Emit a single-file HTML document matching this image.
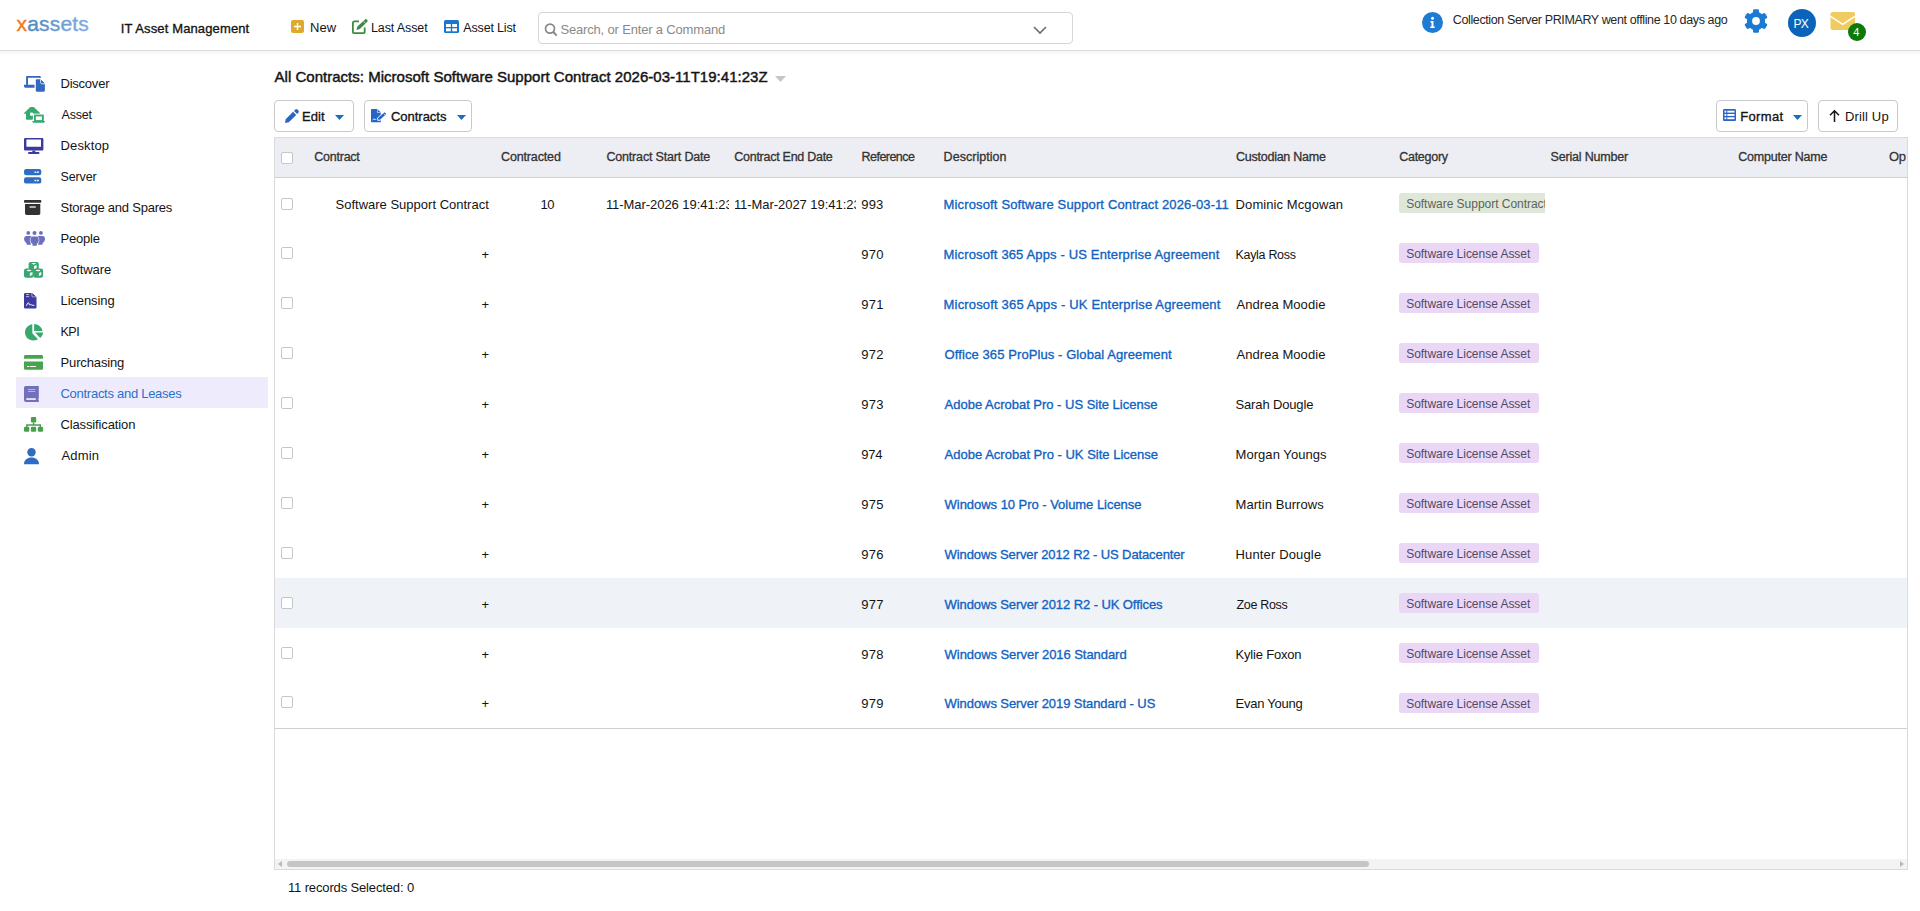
<!DOCTYPE html>
<html><head><meta charset="utf-8">
<style>
html,body{margin:0;padding:0;width:1920px;height:911px;overflow:hidden;background:#fff;}
body{position:relative;font-family:"Liberation Sans", sans-serif;color:#222;}
.a{position:absolute;box-sizing:border-box;}
.t{position:absolute;white-space:nowrap;}
svg{position:absolute;overflow:visible;}
</style></head><body>
<div class="a" style="left:0px;top:50px;width:1920px;height:1px;background:#dedbd8;"></div>
<div class="a" style="left:0px;top:51px;width:1920px;height:4px;background:linear-gradient(#f5f5f5,#fdfdfd);"></div>
<svg style="left:0;top:0" width="110" height="45" viewBox="0 0 110 45"><defs><linearGradient id="lg" x1="29" y1="0" x2="90" y2="0" gradientUnits="userSpaceOnUse"><stop offset="0" stop-color="#508bbf"/><stop offset="1" stop-color="#86ade6"/></linearGradient></defs><text x="16.6" y="30.6" font-family="Liberation Sans" font-size="21" letter-spacing="0.15" stroke-width="0.4"><tspan fill="#ef7b1c" stroke="#ef7b1c">x</tspan><tspan fill="url(#lg)" stroke="url(#lg)">assets</tspan></text></svg>
<div class="t" style="left:120.70px;top:21.70px;font-size:13px;line-height:13px;-webkit-text-stroke:0.33px currentColor;color:#141414;letter-spacing:0.128px;">IT Asset Management</div>
<svg style="left:291px;top:20px" width="13" height="13" viewBox="0 0 13 13"><rect x="0" y="0" width="13" height="13" rx="2" fill="#e0a92a"/><path d="M6.5 3v7M3 6.5h7" stroke="#fff" stroke-width="1.4"/></svg>
<div class="t" style="left:309.90px;top:20.90px;font-size:13px;line-height:13px;color:#141414;letter-spacing:0.150px;">New</div>
<svg style="left:352px;top:19px" width="16" height="15" viewBox="0 0 16 15"><path d="M7 2.4H2.3C1.5 2.4.9 3 .9 3.8v9.1c0 .8.6 1.3 1.4 1.3h9.1c.8 0 1.3-.5 1.3-1.3V8.4" fill="none" stroke="#3d8b40" stroke-width="1.8"/><path d="M13 .4a1.3 1.3 0 0 1 1.8 0l.5.5a1.3 1.3 0 0 1 0 1.8L7.9 10.1 4.4 11.1l1-3.5z" fill="#3d8b40"/><path d="M11.4 2.1l2.1 2.1" stroke="#fff" stroke-width=".7"/></svg>
<div class="t" style="left:371.00px;top:21.75px;font-size:12.5px;line-height:12.5px;color:#141414;letter-spacing:-0.111px;">Last Asset</div>
<svg style="left:444px;top:20px" width="15" height="13" viewBox="0 0 15 13"><rect x="0" y="0" width="15" height="13" rx="1.5" fill="#1a74d2"/><rect x="2" y="4" width="4.8" height="3" fill="#fff"/><rect x="8.2" y="4" width="4.8" height="3" fill="#fff"/><rect x="2" y="8.3" width="4.8" height="3" fill="#fff"/><rect x="8.2" y="8.3" width="4.8" height="3" fill="#fff"/></svg>
<div class="t" style="left:463.30px;top:21.55px;font-size:12.5px;line-height:12.5px;color:#141414;letter-spacing:-0.167px;">Asset List</div>
<div class="a" style="left:538px;top:12px;width:535px;height:32px;border:1px solid #d6d6d6;border-radius:4px;background:#fff;"></div>
<svg style="left:544px;top:23px" width="14" height="13" viewBox="0 0 14 13"><circle cx="6" cy="5.6" r="4.5" fill="none" stroke="#878787" stroke-width="1.7"/><path d="M9.3 9l3.4 3.6" stroke="#878787" stroke-width="1.9"/></svg>
<div class="t" style="left:560.40px;top:22.80px;font-size:13px;line-height:13px;color:#8a8a8a;letter-spacing:-0.168px;">Search, or Enter a Command</div>
<svg style="left:1033px;top:25.5px" width="14" height="9" viewBox="0 0 14 9"><path d="M1 1l6 6 6-6" fill="none" stroke="#707070" stroke-width="1.7"/></svg>
<svg style="left:1422px;top:11.5px" width="21" height="21" viewBox="0 0 21 21"><circle cx="10.5" cy="10.5" r="10.5" fill="#1f7bd1"/><circle cx="10.5" cy="6.2" r="1.5" fill="#fff"/><path d="M8.6 9h2.9v5.4h1.2v1.7H8.3v-1.7h1.2v-3.7h-.9z" fill="#fff"/></svg>
<div class="t" style="left:1452.75px;top:14.05px;font-size:12.5px;line-height:12.5px;color:#262626;letter-spacing:-0.372px;">Collection Server PRIMARY went offline 10 days ago</div>
<svg style="left:1744.3px;top:8.9px" width="24" height="24" viewBox="0 0 24 24"><g fill="#1b7ad3"><circle cx="12" cy="12" r="9.2"/><rect x="9" y="0.2" width="6" height="6" rx="1.3" transform="rotate(0 12 12)"/><rect x="9" y="0.2" width="6" height="6" rx="1.3" transform="rotate(60 12 12)"/><rect x="9" y="0.2" width="6" height="6" rx="1.3" transform="rotate(120 12 12)"/><rect x="9" y="0.2" width="6" height="6" rx="1.3" transform="rotate(180 12 12)"/><rect x="9" y="0.2" width="6" height="6" rx="1.3" transform="rotate(240 12 12)"/><rect x="9" y="0.2" width="6" height="6" rx="1.3" transform="rotate(300 12 12)"/></g><circle cx="12" cy="12" r="3.9" fill="#fff"/></svg>
<div class="a" style="left:1788px;top:9px;width:28px;height:28px;border-radius:50%;background:#0b64b9;"></div>
<div class="t" style="left:1793.60px;top:17.80px;font-size:12px;line-height:12px;color:#fff;letter-spacing:-0.850px;">PX</div>
<svg style="left:1830px;top:12px" width="26" height="19" viewBox="0 0 26 19"><rect x="0.5" y="0" width="24.5" height="18" rx="2" fill="#f0cb5f"/><path d="M.6 4.4l12.1 8 12.1-8" fill="none" stroke="#fff" stroke-width="1.5"/></svg>
<div class="a" style="left:1847.8px;top:23.3px;width:18.2px;height:18.2px;border-radius:50%;background:#0a7a0a;"></div>
<div class="t" style="left:1853.30px;top:27.30px;font-size:11px;line-height:11px;color:#fff;">4</div>
<div class="a" style="left:16px;top:377px;width:252px;height:31px;background:#eeecfc;"></div>
<div class="t" style="left:60.50px;top:77.00px;font-size:13px;line-height:13px;color:#141414;letter-spacing:-0.229px;">Discover</div>
<div class="t" style="left:61.50px;top:108.75px;font-size:12.5px;line-height:12.5px;color:#141414;letter-spacing:-0.200px;">Asset</div>
<div class="t" style="left:60.50px;top:139.00px;font-size:13px;line-height:13px;color:#141414;letter-spacing:0.150px;">Desktop</div>
<div class="t" style="left:60.50px;top:170.75px;font-size:12.5px;line-height:12.5px;color:#141414;letter-spacing:-0.120px;">Server</div>
<div class="t" style="left:60.50px;top:201.00px;font-size:13px;line-height:13px;color:#141414;letter-spacing:-0.229px;">Storage and Spares</div>
<div class="t" style="left:60.50px;top:232.00px;font-size:13px;line-height:13px;color:#141414;letter-spacing:-0.200px;">People</div>
<div class="t" style="left:60.50px;top:263.00px;font-size:13px;line-height:13px;color:#141414;letter-spacing:-0.086px;">Software</div>
<div class="t" style="left:60.50px;top:294.00px;font-size:13px;line-height:13px;color:#141414;letter-spacing:-0.100px;">Licensing</div>
<div class="t" style="left:60.50px;top:325.75px;font-size:12.5px;line-height:12.5px;color:#141414;letter-spacing:-0.500px;">KPI</div>
<div class="t" style="left:60.50px;top:356.00px;font-size:13px;line-height:13px;color:#141414;letter-spacing:-0.133px;">Purchasing</div>
<div class="t" style="left:60.50px;top:387.00px;font-size:13px;line-height:13px;color:#2b6fcd;letter-spacing:-0.274px;">Contracts and Leases</div>
<div class="t" style="left:60.50px;top:418.00px;font-size:13px;line-height:13px;color:#141414;letter-spacing:-0.131px;">Classification</div>
<div class="t" style="left:61.50px;top:449.00px;font-size:13px;line-height:13px;color:#141414;letter-spacing:0.150px;">Admin</div>
<svg style="left:24px;top:76px" width="22" height="17" viewBox="0 0 22 17"><g fill="#3268c0"><path d="M3.1 0H15.6C16.3 0 16.8.5 16.8 1.2V1.9H15.2V1.7H4V8.8H10.5V11.7H1.4C.6 11.7 0 11.1 0 10.3V8.8H2.1V1C2.1.4 2.5 0 3.1 0z"/><path d="M13 3.3H16.6L20.9 7.7V14.6C20.9 15.3 20.4 15.8 19.7 15.8H13C12.3 15.8 11.8 15.3 11.8 14.6V4.5C11.8 3.8 12.3 3.3 13 3.3z"/></g><path d="M16.6 3.2V6.6C16.6 7.2 17.1 7.8 17.7 7.8H21" fill="none" stroke="#fff" stroke-width=".8"/><path d="M17.5 4.2L20.1 6.9H17.5z" fill="#3268c0"/></svg>
<svg style="left:24px;top:107px" width="22" height="17" viewBox="0 0 22 17"><g fill="#36a96f"><path d="M6.3 0H9.7L16 6.1C16.3 6.5 16.1 6.8 15.6 6.8H.5C0 6.8-.2 6.4.1 6.1z"/><rect x="2" y="6" width="6.9" height="6.7" rx="1"/></g><rect x="6" y="5.5" width="3.1" height="3.3" rx="1.1" fill="#fff"/><rect x="9.1" y="6.8" width="13" height="10" fill="#fff"/><rect x="10.9" y="8.5" width="8" height="5.5" fill="none" stroke="#36a96f" stroke-width="1.8"/><path d="M8.1 13.9H21.2L20.6 15.3C20.4 15.6 20.1 15.8 19.7 15.8H9.6C9.2 15.8 8.9 15.6 8.7 15.3z" fill="#36a96f"/></svg>
<svg style="left:24px;top:138px" width="20" height="17" viewBox="0 0 20 17"><path d="M1.3 0h16.8c.7 0 1.3.6 1.3 1.3v10c0 .7-.6 1.3-1.3 1.3H1.3C.6 12.6 0 12 0 11.3v-10C0 .6.6 0 1.3 0zM2.4 1.4v7.3h14.6V1.4z" fill="#3b3a9f" fill-rule="evenodd"/><path d="M8.3 12.6h3v1.8h-3z" fill="#3b3a9f"/><rect x="4" y="14" width="11.5" height="2" rx="1" fill="#3b3a9f"/></svg>
<svg style="left:24px;top:169px" width="18" height="15" viewBox="0 0 18 15"><rect x="0" y="0" width="17.3" height="6.3" rx="2.2" fill="#2f6dc3"/><rect x="0" y="8.3" width="17.3" height="6.3" rx="2.2" fill="#2f6dc3"/><rect x="10.5" y="2.5" width="1.8" height="1.4" fill="#fff"/><rect x="13" y="2.5" width="1.8" height="1.4" fill="#fff"/><rect x="10.5" y="10.8" width="1.8" height="1.4" fill="#fff"/><rect x="13" y="10.8" width="1.8" height="1.4" fill="#fff"/></svg>
<svg style="left:24px;top:200px" width="18" height="16" viewBox="0 0 18 16"><rect x="0" y="0" width="17.3" height="2.8" rx=".8" fill="#333"/><path d="M1 4h15.3v9.3c0 1-.8 1.7-1.7 1.7H2.7C1.7 15 1 14.3 1 13.3z" fill="#333"/><rect x="5.5" y="6.3" width="6.3" height="1.4" rx=".5" fill="#ddd"/></svg>
<svg style="left:24px;top:231px" width="22" height="15" viewBox="0 0 22 15"><g fill="#6e6ebf"><circle cx="4.3" cy="1.9" r="1.9"/><circle cx="10.5" cy="1.9" r="2"/><circle cx="16.9" cy="1.9" r="1.9"/><path d="M2.5 5.1H7.6C6.4 6.5 5.8 7.8 5.8 9.3 5.8 10.6 6.3 11.8 7 12.7V13.7H2.6V12.2C1 11 .1 9.7.1 8.1.1 6.3 1 5.1 2.5 5.1z"/><path d="M8.6 5.5H12.4C14 5.5 14.8 7 14.8 9.2 14.8 11 13.9 12.3 12.8 12.8V14.8H8.5V12.8C7.4 12.3 6.4 11 6.4 9.2 6.4 7 7.1 5.5 8.6 5.5z"/><path d="M18.6 5.1H13.5C14.7 6.5 15.3 7.8 15.3 9.3 15.3 10.6 14.8 11.8 14.1 12.7V13.7H18.5V12.2C20.1 11 21 9.7 21 8.1 21 6.3 20.1 5.1 18.6 5.1z"/></g></svg>
<svg style="left:24px;top:262px" width="20" height="16" viewBox="0 0 20 16"><g fill="#36a86f"><rect x="4.6" y="0" width="10.2" height="8" rx="2"/><rect x="0" y="6.6" width="9.8" height="9.2" rx="2.2"/><rect x="9.3" y="6.6" width="9.8" height="9.2" rx="2.2"/></g><g fill="#fff"><path d="M7.3 1.1H12.3L9.8 2.8z"/><path d="M10.1 3.9L12.6 3V6.2L10.1 7.1z"/><ellipse cx="5" cy="8.5" rx="2.3" ry=".75"/><path d="M5.8 11L8.4 10V13L5.8 14z"/><ellipse cx="14.1" cy="8.5" rx="2.3" ry=".75"/><path d="M14.9 11L17.3 10V13L14.9 14z"/></g></svg>
<svg style="left:24px;top:293px" width="14" height="16" viewBox="0 0 14 16"><path d="M1.3 0h6.9l4.3 4.3v9.9c0 .8-.6 1.3-1.3 1.3H1.3C.6 15.5 0 15 0 14.2V1.3C0 .6.6 0 1.3 0z" fill="#3d3aa0"/><path d="M7.9 0v3.1c0 .4.3.7.7.7h3.9" fill="none" stroke="#c8c8e8" stroke-width=".8"/><path d="M9 .9l2.6 2.3H9z" fill="#3d3aa0"/><rect x="2" y="1.2" width="3.2" height=".8" fill="#d8d8f0"/><rect x="2" y="3.1" width="3.2" height="1" fill="#b8b8e0"/><path d="M2 12.8C3 12.6 3.3 9.8 4.4 9.8S5.1 12.1 5.6 12 6.5 11.5 7.1 11.7 8 12.3 10.4 12.4" fill="none" stroke="#fff" stroke-width="1"/></svg>
<svg style="left:25px;top:323.5px" width="19" height="16.4" viewBox="0 0 19 17" preserveAspectRatio="none"><path d="M7.3 0.3v9.2l5.7 6.3c-1.4.9-3 1.2-4.7 1.2C3.7 17 0 13.2 0 8.7 0 4.4 3.2.8 7.3.3z" fill="#38a86d"/><path d="M9.1 0c4.3.1 7.8 3.4 8.3 7.2H9.1z" fill="#38a86d"/><path d="M10 8.9h8.1c-.2 2.3-1.3 4.2-2.9 5.5z" fill="#38a86d"/></svg>
<svg style="left:24px;top:355px" width="20" height="15" viewBox="0 0 20 15"><path d="M1.5 0h16c.8 0 1.5.7 1.5 1.5v2.2H0V1.5C0 .7.7 0 1.5 0z" fill="#47a34e"/><path d="M0 6.5h19v6.7c0 .9-.7 1.6-1.6 1.6H1.6C.7 14.8 0 14.1 0 13.2z" fill="#47a34e"/><path d="M3 11.5h2.3M6.1 11.5h5.8" stroke="#fff" stroke-width="1"/></svg>
<svg style="left:24px;top:386px" width="15" height="16" viewBox="0 0 15 16"><path d="M1.8 0h13v12.5l-.8.8.8.8V16H2C.9 16 0 15.1 0 14V1.8C0 .8.8 0 1.8 0z" fill="#7070bd"/><rect x="4" y="3" width="7.3" height="1" fill="#b6b6e0"/><rect x="4" y="5" width="7.3" height="1" fill="#b6b6e0"/><rect x="2.3" y="12.3" width="9.5" height="1.5" fill="#fff"/></svg>
<svg style="left:24px;top:417px" width="20" height="15" viewBox="0 0 20 15"><rect x="6.9" y="0" width="5.3" height="5.5" rx="1.2" fill="#48a04a"/><path d="M9.55 5.5v2.5M2.8 10.5V8h13.5v2.5" stroke="#48a04a" stroke-width="1.4" fill="none"/><rect x="0" y="9.8" width="5.3" height="5" rx="1.2" fill="#48a04a"/><rect x="6.9" y="9.8" width="5.3" height="5" rx="1.2" fill="#48a04a"/><rect x="13.8" y="9.8" width="5.3" height="5" rx="1.2" fill="#48a04a"/></svg>
<svg style="left:24px;top:448px" width="15" height="17" viewBox="0 0 15 17"><circle cx="7.5" cy="4.2" r="4.2" fill="#2e6bc3"/><path d="M7.5 9.5c4 0 7.5 2.5 7.5 6.5v.2H0V16c0-4 3.5-6.5 7.5-6.5z" fill="#2e6bc3"/></svg>
<div class="t" style="left:274.50px;top:68.60px;font-size:15px;line-height:15px;-webkit-text-stroke:0.45px currentColor;color:#141414;letter-spacing:0.021px;">All Contracts: Microsoft Software Support Contract 2026-03-11T19:41:23Z</div>
<svg style="left:775px;top:76px" width="11" height="6" viewBox="0 0 11 6"><path d="M0 0h11L5.5 6z" fill="#c6c6c6"/></svg>
<div class="a" style="left:274px;top:100px;width:80px;height:32px;border:1px solid #c9c9c9;border-radius:4px;background:#fff;"></div>
<svg style="left:285px;top:108.5px" width="14" height="14" viewBox="0 0 14 14"><path d="M10.3.6a1.5 1.5 0 0 1 2.1 0l1 1a1.5 1.5 0 0 1 0 2.1l-1.3 1.3-3.1-3.1zM8.1 2.8l3.1 3.1-7.4 7.4L0 14l.7-3.8z" fill="#2a64c5"/></svg>
<div class="t" style="left:302.00px;top:109.90px;font-size:13px;line-height:13px;-webkit-text-stroke:0.33px currentColor;color:#141414;letter-spacing:0.067px;">Edit</div>
<svg style="left:335px;top:114.5px" width="9" height="5" viewBox="0 0 9 5"><path d="M0 0h9L4.5 5z" fill="#1b6cc6"/></svg>
<div class="a" style="left:364px;top:100px;width:108px;height:32px;border:1px solid #c9c9c9;border-radius:4px;background:#fff;"></div>
<svg style="left:371px;top:108.5px" width="16" height="14" viewBox="0 0 16 14"><path d="M1 0H6.3L9.8 3.5V13.2H1C.4 13.2 0 12.8 0 12.2V1C0 .4.4 0 1 0z" fill="#2563c6"/><path d="M6.4 .2V3.6H9.7" fill="none" stroke="#fff" stroke-width=".6"/><path d="M8 9.7L14.6 3.9" stroke="#fff" stroke-width="3.8" stroke-linecap="round"/><path d="M7.6 10.2L14.4 4.1" stroke="#2563c6" stroke-width="2.6"/><path d="M6.6 11.3L7.2 9.4 8.6 10.8z" fill="#2563c6"/><path d="M12.6 4.6l1.5 1.5" stroke="#fff" stroke-width=".6"/><path d="M1.6 11.3L2.9 9.6 3.8 11 4.6 10.2 5.4 11M6 11.1H9.6" fill="none" stroke="#fff" stroke-width=".7"/></svg>
<div class="t" style="left:391.00px;top:109.90px;font-size:13px;line-height:13px;-webkit-text-stroke:0.33px currentColor;color:#141414;letter-spacing:-0.031px;">Contracts</div>
<svg style="left:457px;top:114.5px" width="9" height="5" viewBox="0 0 9 5"><path d="M0 0h9L4.5 5z" fill="#1b6cc6"/></svg>
<div class="a" style="left:1716px;top:100px;width:92px;height:32px;border:1px solid #c9c9c9;border-radius:4px;background:#fff;"></div>
<svg style="left:1722.5px;top:109px" width="13" height="12" viewBox="0 0 13 12"><path d="M1.3 0h10.4c.7 0 1.3.6 1.3 1.3v9.4c0 .7-.6 1.3-1.3 1.3H1.3C.6 12 0 11.4 0 10.7V1.3C0 .6.6 0 1.3 0z" fill="#2a64c5"/><rect x="1.5" y="1.7" width="1.8" height="1.9" fill="#fff"/><rect x="4.3" y="1.7" width="7.2" height="1.9" fill="#fff"/><rect x="1.5" y="5" width="1.8" height="1.9" fill="#fff"/><rect x="4.3" y="5" width="7.2" height="1.9" fill="#fff"/><rect x="1.5" y="8.3" width="1.8" height="1.9" fill="#fff"/><rect x="4.3" y="8.3" width="7.2" height="1.9" fill="#fff"/></svg>
<div class="t" style="left:1740.25px;top:109.60px;font-size:13px;line-height:13px;-webkit-text-stroke:0.33px currentColor;color:#141414;letter-spacing:0.330px;">Format</div>
<svg style="left:1793px;top:114.5px" width="9" height="5" viewBox="0 0 9 5"><path d="M0 0h9L4.5 5z" fill="#1b6cc6"/></svg>
<div class="a" style="left:1818px;top:100px;width:80px;height:32px;border:1px solid #c9c9c9;border-radius:4px;background:#fff;"></div>
<svg style="left:1829px;top:109.5px" width="11" height="12" viewBox="0 0 11 12"><path d="M5.5 1v11M1 5.3l4.5-4.5 4.5 4.5" fill="none" stroke="#141414" stroke-width="1.5"/></svg>
<div class="t" style="left:1845.00px;top:109.60px;font-size:13px;line-height:13px;color:#141414;letter-spacing:0.143px;">Drill Up</div>
<div class="a" style="left:274px;top:137px;width:1634px;height:733px;border:1px solid #dadada;"></div>
<div class="a" style="left:275px;top:138px;width:1632px;height:39px;background:#edeef3;"></div>
<div class="a" style="left:275px;top:177px;width:1632px;height:1px;background:#cfcfcf;"></div>
<div class="a" style="left:281px;top:152px;width:12px;height:12px;border:1px solid #c6c6c6;border-radius:2px;background:#fff;"></div>
<div class="t" style="left:314.30px;top:151.15px;font-size:12.5px;line-height:12.5px;-webkit-text-stroke:0.31px currentColor;color:#333;letter-spacing:-0.243px;">Contract</div>
<div class="t" style="left:501.00px;top:151.15px;font-size:12.5px;line-height:12.5px;-webkit-text-stroke:0.31px currentColor;color:#333;letter-spacing:-0.144px;">Contracted</div>
<div class="t" style="left:606.40px;top:151.15px;font-size:12.5px;line-height:12.5px;-webkit-text-stroke:0.31px currentColor;color:#333;letter-spacing:-0.172px;">Contract Start Date</div>
<div class="t" style="left:734.30px;top:151.15px;font-size:12.5px;line-height:12.5px;-webkit-text-stroke:0.31px currentColor;color:#333;letter-spacing:-0.269px;">Contract End Date</div>
<div class="t" style="left:861.50px;top:151.15px;font-size:12.5px;line-height:12.5px;-webkit-text-stroke:0.31px currentColor;color:#333;letter-spacing:-0.525px;">Reference</div>
<div class="t" style="left:943.60px;top:151.15px;font-size:12.5px;line-height:12.5px;-webkit-text-stroke:0.31px currentColor;color:#333;letter-spacing:0.040px;">Description</div>
<div class="t" style="left:1236.00px;top:151.15px;font-size:12.5px;line-height:12.5px;-webkit-text-stroke:0.31px currentColor;color:#333;letter-spacing:-0.246px;">Custodian Name</div>
<div class="t" style="left:1399.20px;top:151.15px;font-size:12.5px;line-height:12.5px;-webkit-text-stroke:0.31px currentColor;color:#333;letter-spacing:-0.257px;">Category</div>
<div class="t" style="left:1550.50px;top:151.15px;font-size:12.5px;line-height:12.5px;-webkit-text-stroke:0.31px currentColor;color:#333;letter-spacing:-0.183px;">Serial Number</div>
<div class="t" style="left:1738.30px;top:151.15px;font-size:12.5px;line-height:12.5px;-webkit-text-stroke:0.31px currentColor;color:#333;letter-spacing:-0.217px;">Computer Name</div>
<div class="a" style="left:1880px;top:140px;width:26px;height:30px;overflow:hidden;"><div class="t" style="left:9px;top:10.40px;font-size:13px;line-height:13px;-webkit-text-stroke:0.26px #333;color:#333;letter-spacing:-0.3px">Op</div></div>
<div class="a" style="left:275px;top:578px;width:1632px;height:50px;background:#eff2f7;"></div>
<div class="a" style="left:281px;top:197.5px;width:12px;height:12px;border:1px solid #c6c6c6;border-radius:2px;background:#fff;"></div>
<div class="t" style="left:335.50px;top:198.00px;font-size:13px;line-height:13px;color:#141414;letter-spacing:0.004px;">Software Support Contract</div>
<div class="t" style="left:540.40px;top:198.00px;font-size:13px;line-height:13px;color:#141414;letter-spacing:-0.400px;">10</div>
<div class="a" style="left:600px;top:180px;width:128.5px;height:46px;overflow:hidden;"><div class="t" style="left:5.90px;top:18.00px;font-size:13px;line-height:13px;color:#141414;letter-spacing:-0.050px;">11-Mar-2026 19:41:23</div>
</div>
<div class="a" style="left:728px;top:180px;width:128px;height:46px;overflow:hidden;"><div class="t" style="left:5.90px;top:18.00px;font-size:13px;line-height:13px;color:#141414;letter-spacing:-0.050px;">11-Mar-2027 19:41:23</div>
</div>
<div class="t" style="left:861.30px;top:198.00px;font-size:13px;line-height:13px;color:#141414;letter-spacing:0.100px;">993</div>
<div class="t" style="left:943.60px;top:198.00px;font-size:13px;line-height:13px;-webkit-text-stroke:0.33px currentColor;color:#1062c2;letter-spacing:0.144px;">Microsoft Software Support Contract 2026-03-11</div>
<div class="t" style="left:1235.60px;top:198.00px;font-size:13px;line-height:13px;color:#141414;letter-spacing:0.086px;">Dominic Mcgowan</div>
<div class="a" style="left:1399px;top:193px;width:146px;height:20px;overflow:hidden;"><div class="a" style="left:0;top:0;width:170px;height:20px;background:#dfe8d8;border-radius:3px;"></div><div class="t" style="left:7.20px;top:5.00px;font-size:12px;line-height:12px;color:#5c625c;letter-spacing:-0.029px;">Software Support Contract</div>
</div>
<div class="a" style="left:281px;top:247px;width:12px;height:12px;border:1px solid #c6c6c6;border-radius:2px;background:#fff;"></div>
<div class="t" style="left:481.60px;top:247.50px;font-size:13px;line-height:13px;color:#141414;">+</div>
<div class="t" style="left:861.30px;top:248.00px;font-size:13px;line-height:13px;color:#141414;letter-spacing:0.200px;">970</div>
<div class="t" style="left:943.60px;top:248.00px;font-size:13px;line-height:13px;-webkit-text-stroke:0.33px currentColor;color:#1062c2;letter-spacing:0.144px;">Microsoft 365 Apps - US Enterprise Agreement</div>
<div class="t" style="left:1235.50px;top:248.75px;font-size:12.5px;line-height:12.5px;color:#141414;letter-spacing:-0.311px;">Kayla Ross</div>
<div class="a" style="left:1399px;top:243px;width:140px;height:20px;background:#e9d7f5;border-radius:3px;"></div>
<div class="t" style="left:1406.20px;top:248.00px;font-size:12px;line-height:12px;color:#514a68;letter-spacing:-0.029px;">Software License Asset</div>
<div class="a" style="left:281px;top:297px;width:12px;height:12px;border:1px solid #c6c6c6;border-radius:2px;background:#fff;"></div>
<div class="t" style="left:481.60px;top:297.50px;font-size:13px;line-height:13px;color:#141414;">+</div>
<div class="t" style="left:861.30px;top:298.00px;font-size:13px;line-height:13px;color:#141414;letter-spacing:0.200px;">971</div>
<div class="t" style="left:943.60px;top:298.00px;font-size:13px;line-height:13px;-webkit-text-stroke:0.33px currentColor;color:#1062c2;letter-spacing:0.167px;">Microsoft 365 Apps - UK Enterprise Agreement</div>
<div class="t" style="left:1236.50px;top:298.00px;font-size:13px;line-height:13px;color:#141414;letter-spacing:0.058px;">Andrea Moodie</div>
<div class="a" style="left:1399px;top:293px;width:140px;height:20px;background:#e9d7f5;border-radius:3px;"></div>
<div class="t" style="left:1406.20px;top:298.00px;font-size:12px;line-height:12px;color:#514a68;letter-spacing:-0.029px;">Software License Asset</div>
<div class="a" style="left:281px;top:347px;width:12px;height:12px;border:1px solid #c6c6c6;border-radius:2px;background:#fff;"></div>
<div class="t" style="left:481.60px;top:347.50px;font-size:13px;line-height:13px;color:#141414;">+</div>
<div class="t" style="left:861.30px;top:348.00px;font-size:13px;line-height:13px;color:#141414;letter-spacing:0.200px;">972</div>
<div class="t" style="left:944.60px;top:348.00px;font-size:13px;line-height:13px;-webkit-text-stroke:0.33px currentColor;color:#1062c2;letter-spacing:0.089px;">Office 365 ProPlus - Global Agreement</div>
<div class="t" style="left:1236.50px;top:348.00px;font-size:13px;line-height:13px;color:#141414;letter-spacing:0.058px;">Andrea Moodie</div>
<div class="a" style="left:1399px;top:343px;width:140px;height:20px;background:#e9d7f5;border-radius:3px;"></div>
<div class="t" style="left:1406.20px;top:348.00px;font-size:12px;line-height:12px;color:#514a68;letter-spacing:-0.029px;">Software License Asset</div>
<div class="a" style="left:281px;top:397px;width:12px;height:12px;border:1px solid #c6c6c6;border-radius:2px;background:#fff;"></div>
<div class="t" style="left:481.60px;top:397.50px;font-size:13px;line-height:13px;color:#141414;">+</div>
<div class="t" style="left:861.30px;top:398.00px;font-size:13px;line-height:13px;color:#141414;letter-spacing:0.200px;">973</div>
<div class="t" style="left:944.60px;top:398.00px;font-size:13px;line-height:13px;-webkit-text-stroke:0.33px currentColor;color:#1062c2;letter-spacing:-0.012px;">Adobe Acrobat Pro - US Site License</div>
<div class="t" style="left:1235.50px;top:398.00px;font-size:13px;line-height:13px;color:#141414;letter-spacing:-0.145px;">Sarah Dougle</div>
<div class="a" style="left:1399px;top:393px;width:140px;height:20px;background:#e9d7f5;border-radius:3px;"></div>
<div class="t" style="left:1406.20px;top:398.00px;font-size:12px;line-height:12px;color:#514a68;letter-spacing:-0.029px;">Software License Asset</div>
<div class="a" style="left:281px;top:447px;width:12px;height:12px;border:1px solid #c6c6c6;border-radius:2px;background:#fff;"></div>
<div class="t" style="left:481.60px;top:447.50px;font-size:13px;line-height:13px;color:#141414;">+</div>
<div class="t" style="left:861.30px;top:448.00px;font-size:13px;line-height:13px;color:#141414;letter-spacing:-0.300px;">974</div>
<div class="t" style="left:944.60px;top:448.00px;font-size:13px;line-height:13px;-webkit-text-stroke:0.33px currentColor;color:#1062c2;letter-spacing:0.009px;">Adobe Acrobat Pro - UK Site License</div>
<div class="t" style="left:1235.50px;top:448.00px;font-size:13px;line-height:13px;color:#141414;letter-spacing:0.058px;">Morgan Youngs</div>
<div class="a" style="left:1399px;top:443px;width:140px;height:20px;background:#e9d7f5;border-radius:3px;"></div>
<div class="t" style="left:1406.20px;top:448.00px;font-size:12px;line-height:12px;color:#514a68;letter-spacing:-0.029px;">Software License Asset</div>
<div class="a" style="left:281px;top:497px;width:12px;height:12px;border:1px solid #c6c6c6;border-radius:2px;background:#fff;"></div>
<div class="t" style="left:481.60px;top:497.50px;font-size:13px;line-height:13px;color:#141414;">+</div>
<div class="t" style="left:861.30px;top:498.00px;font-size:13px;line-height:13px;color:#141414;letter-spacing:0.200px;">975</div>
<div class="t" style="left:944.60px;top:498.00px;font-size:13px;line-height:13px;-webkit-text-stroke:0.33px currentColor;color:#1062c2;letter-spacing:-0.037px;">Windows 10 Pro - Volume License</div>
<div class="t" style="left:1235.50px;top:498.00px;font-size:13px;line-height:13px;color:#141414;letter-spacing:0.062px;">Martin Burrows</div>
<div class="a" style="left:1399px;top:493px;width:140px;height:20px;background:#e9d7f5;border-radius:3px;"></div>
<div class="t" style="left:1406.20px;top:498.00px;font-size:12px;line-height:12px;color:#514a68;letter-spacing:-0.029px;">Software License Asset</div>
<div class="a" style="left:281px;top:547px;width:12px;height:12px;border:1px solid #c6c6c6;border-radius:2px;background:#fff;"></div>
<div class="t" style="left:481.60px;top:547.50px;font-size:13px;line-height:13px;color:#141414;">+</div>
<div class="t" style="left:861.30px;top:548.00px;font-size:13px;line-height:13px;color:#141414;letter-spacing:0.200px;">976</div>
<div class="t" style="left:944.60px;top:548.00px;font-size:13px;line-height:13px;-webkit-text-stroke:0.33px currentColor;color:#1062c2;letter-spacing:-0.111px;">Windows Server 2012 R2 - US Datacenter</div>
<div class="t" style="left:1235.50px;top:548.00px;font-size:13px;line-height:13px;color:#141414;letter-spacing:0.150px;">Hunter Dougle</div>
<div class="a" style="left:1399px;top:543px;width:140px;height:20px;background:#e9d7f5;border-radius:3px;"></div>
<div class="t" style="left:1406.20px;top:548.00px;font-size:12px;line-height:12px;color:#514a68;letter-spacing:-0.029px;">Software License Asset</div>
<div class="a" style="left:281px;top:597px;width:12px;height:12px;border:1px solid #c6c6c6;border-radius:2px;background:#fff;"></div>
<div class="t" style="left:481.60px;top:597.50px;font-size:13px;line-height:13px;color:#141414;">+</div>
<div class="t" style="left:861.30px;top:598.00px;font-size:13px;line-height:13px;color:#141414;letter-spacing:0.200px;">977</div>
<div class="t" style="left:944.60px;top:598.00px;font-size:13px;line-height:13px;-webkit-text-stroke:0.33px currentColor;color:#1062c2;letter-spacing:-0.085px;">Windows Server 2012 R2 - UK Offices</div>
<div class="t" style="left:1236.50px;top:598.75px;font-size:12.5px;line-height:12.5px;color:#141414;letter-spacing:-0.314px;">Zoe Ross</div>
<div class="a" style="left:1399px;top:593px;width:140px;height:20px;background:#e9d7f5;border-radius:3px;"></div>
<div class="t" style="left:1406.20px;top:598.00px;font-size:12px;line-height:12px;color:#514a68;letter-spacing:-0.029px;">Software License Asset</div>
<div class="a" style="left:281px;top:647px;width:12px;height:12px;border:1px solid #c6c6c6;border-radius:2px;background:#fff;"></div>
<div class="t" style="left:481.60px;top:647.50px;font-size:13px;line-height:13px;color:#141414;">+</div>
<div class="t" style="left:861.30px;top:648.00px;font-size:13px;line-height:13px;color:#141414;letter-spacing:0.200px;">978</div>
<div class="t" style="left:944.60px;top:648.00px;font-size:13px;line-height:13px;-webkit-text-stroke:0.33px currentColor;color:#1062c2;letter-spacing:-0.056px;">Windows Server 2016 Standard</div>
<div class="t" style="left:1235.50px;top:648.00px;font-size:13px;line-height:13px;color:#141414;letter-spacing:-0.190px;">Kylie Foxon</div>
<div class="a" style="left:1399px;top:643px;width:140px;height:20px;background:#e9d7f5;border-radius:3px;"></div>
<div class="t" style="left:1406.20px;top:648.00px;font-size:12px;line-height:12px;color:#514a68;letter-spacing:-0.029px;">Software License Asset</div>
<div class="a" style="left:281px;top:696px;width:12px;height:12px;border:1px solid #c6c6c6;border-radius:2px;background:#fff;"></div>
<div class="t" style="left:481.60px;top:696.50px;font-size:13px;line-height:13px;color:#141414;">+</div>
<div class="t" style="left:861.30px;top:697.00px;font-size:13px;line-height:13px;color:#141414;letter-spacing:0.200px;">979</div>
<div class="t" style="left:944.60px;top:697.00px;font-size:13px;line-height:13px;-webkit-text-stroke:0.33px currentColor;color:#1062c2;letter-spacing:-0.075px;">Windows Server 2019 Standard - US</div>
<div class="t" style="left:1235.50px;top:697.00px;font-size:13px;line-height:13px;color:#141414;letter-spacing:-0.233px;">Evan Young</div>
<div class="a" style="left:1399px;top:693px;width:140px;height:20px;background:#e9d7f5;border-radius:3px;"></div>
<div class="t" style="left:1406.20px;top:698.00px;font-size:12px;line-height:12px;color:#514a68;letter-spacing:-0.029px;">Software License Asset</div>
<div class="a" style="left:275px;top:728px;width:1632px;height:1px;background:#cfcfcf;"></div>
<div class="a" style="left:275px;top:859px;width:1632px;height:10px;background:#f3f3f3;"></div>
<div class="a" style="left:287px;top:861px;width:1082px;height:6px;background:#c6c5c3;border-radius:3px;"></div>
<svg style="left:278px;top:861px" width="4" height="6" viewBox="0 0 4 6"><path d="M4 0v6L0 3z" fill="#b8b8b8"/></svg>
<svg style="left:1900px;top:861px" width="4" height="6" viewBox="0 0 4 6"><path d="M0 0v6l4-3z" fill="#b8b8b8"/></svg>
<div class="t" style="left:288.00px;top:881.00px;font-size:13px;line-height:13px;color:#141414;letter-spacing:-0.143px;">11 records Selected: 0</div>
</body></html>
